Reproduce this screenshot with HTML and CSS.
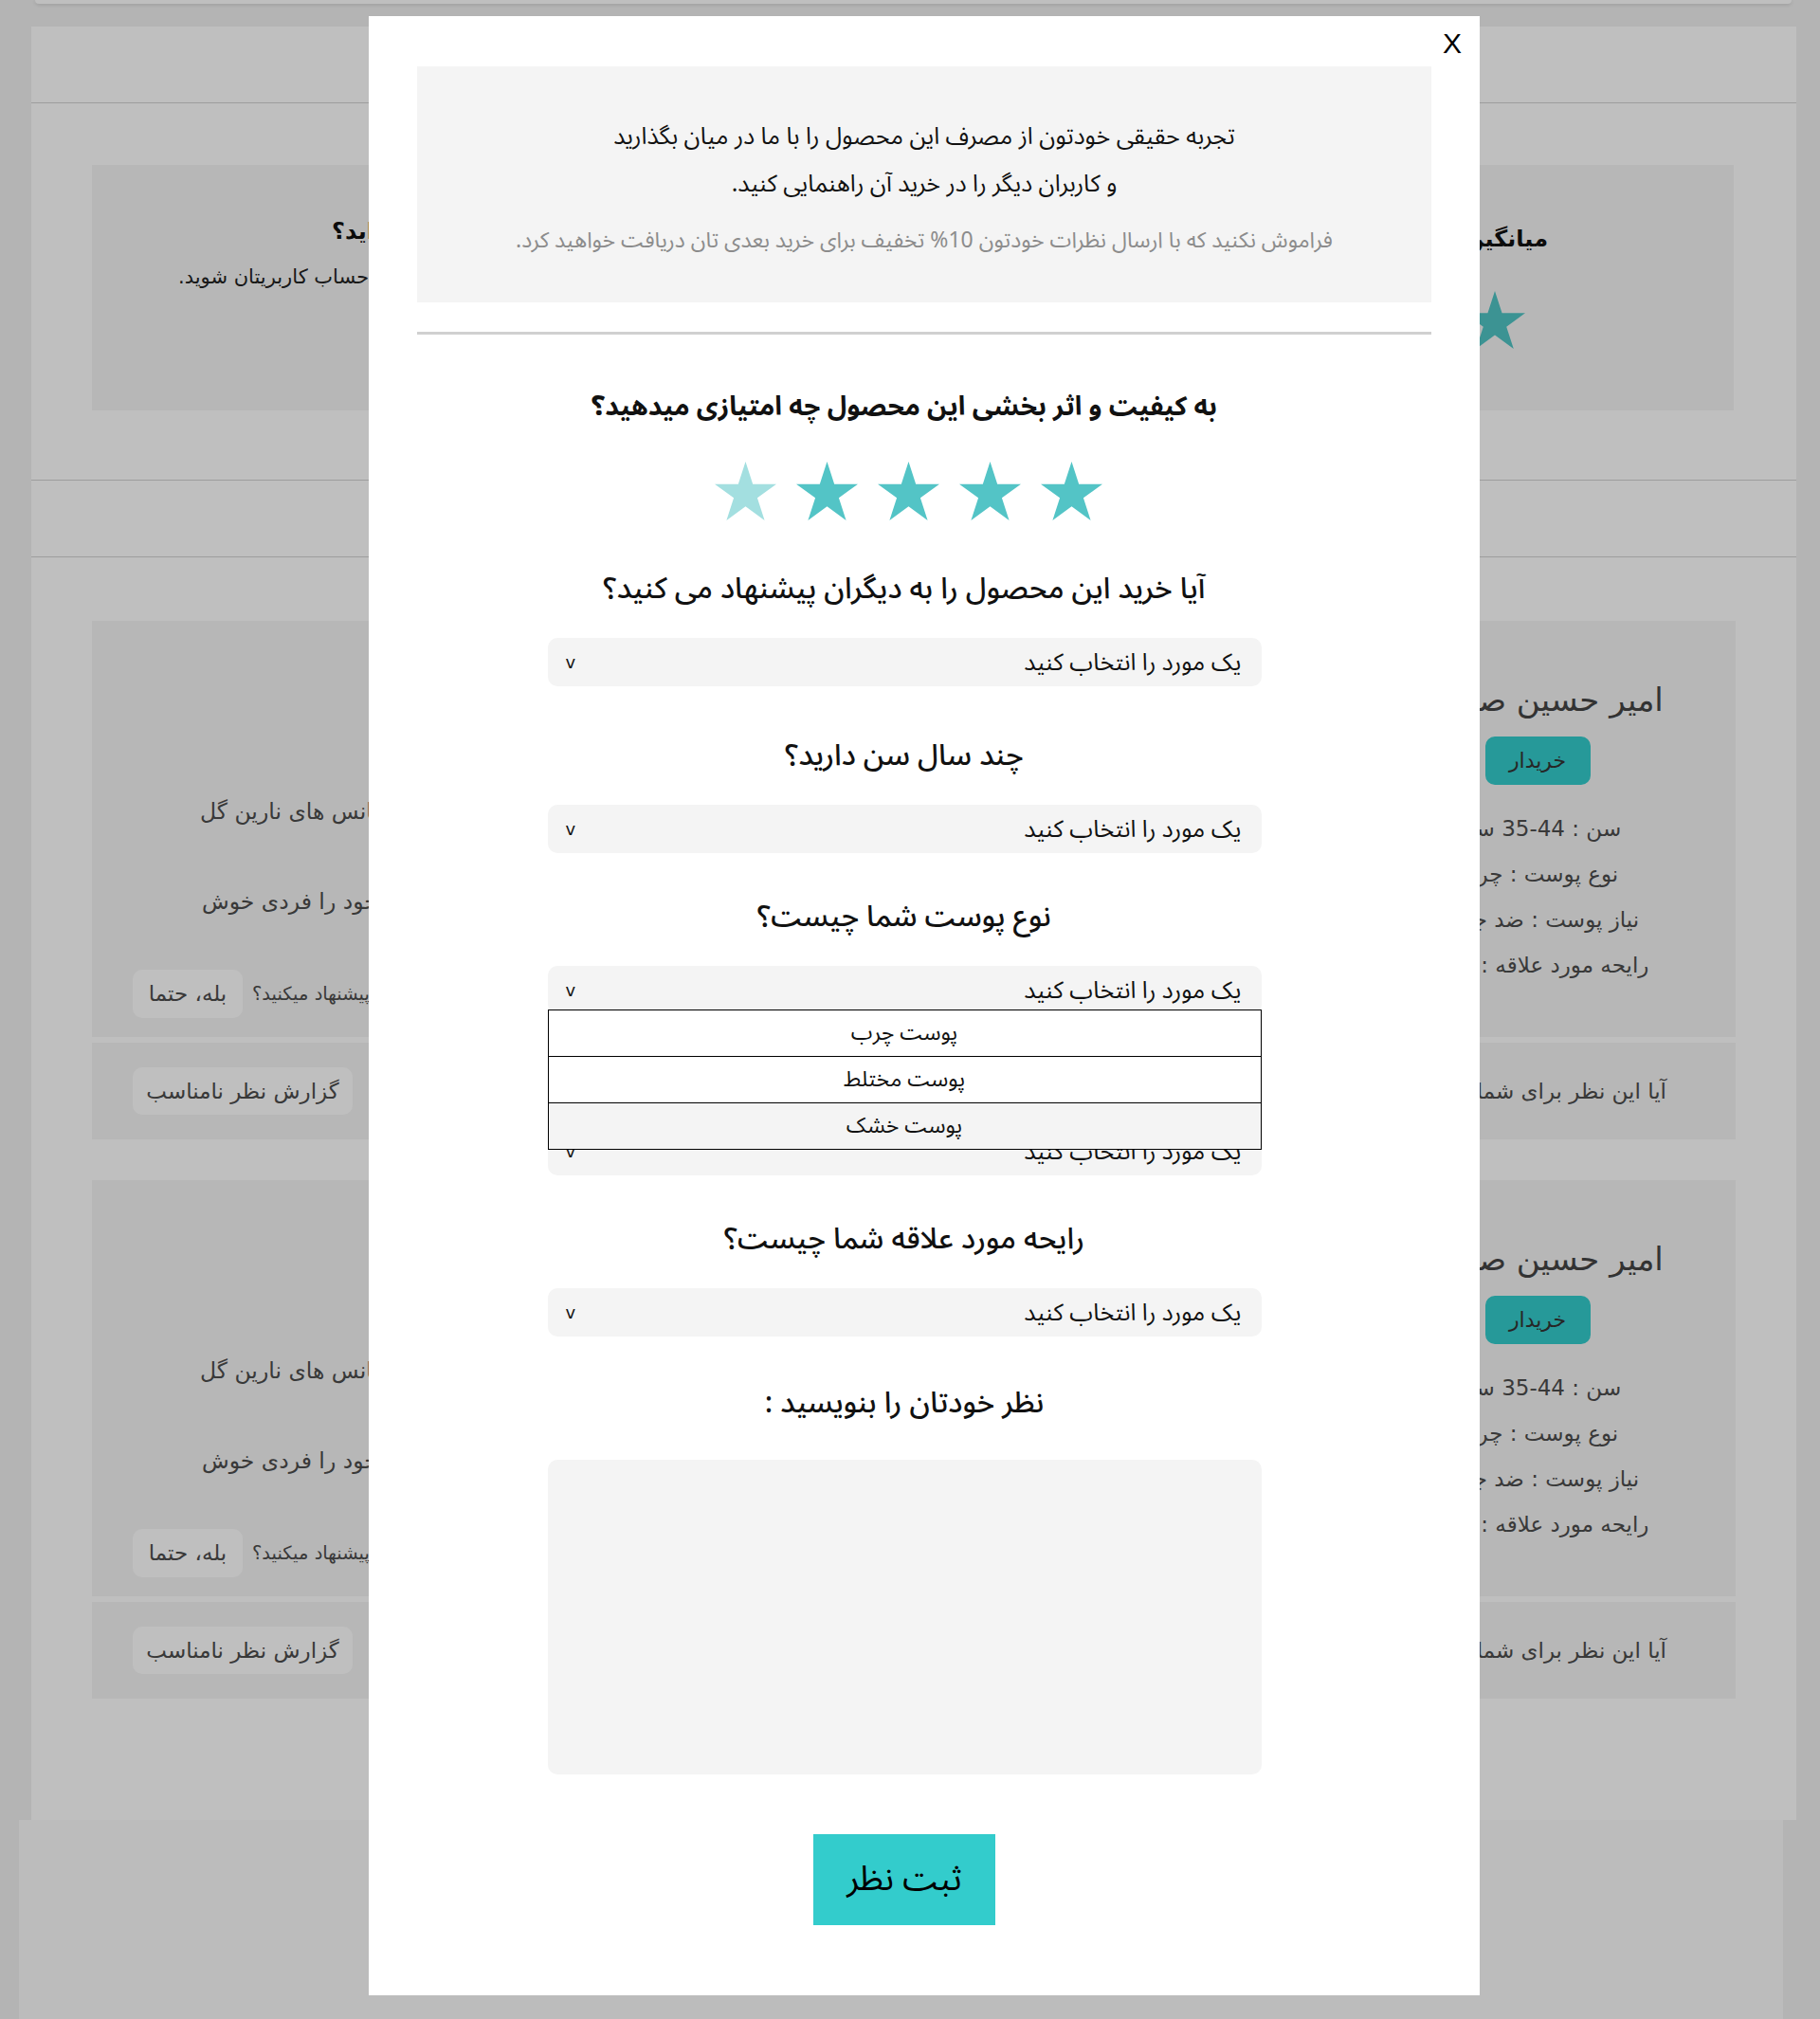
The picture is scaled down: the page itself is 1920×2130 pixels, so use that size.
FILE: index.html
```html
<!DOCTYPE html>
<html lang="fa" dir="rtl">
<head>
<meta charset="utf-8">
<title>ثبت نظر</title>
<link rel="stylesheet" href="styles.css">
</head>
<body>
<div class="page">
  <div class="topbar"></div>
  <main class="panel">
    <div class="sec-head"></div>
    <section class="summary-sec">
      <div class="summary-card">
        <div class="avg">
          <h3 class="avg-title">میانگین امتیاز کاربران</h3>
          <svg class="avg-star" viewBox="0 0 190.2 180.9"><polygon points="95.1,0 117.55,69.1 190.2,69.1 131.43,111.8 153.9,180.9 95.1,138.2 36.3,180.9 58.77,111.8 0,69.1 72.65,69.1"/></svg>
        </div>
        <div class="login-hint">
          <h3 class="hint-title">آیا این محصول را خریداری کرده اید؟</h3>
          <p class="hint-text">برای ثبت نظر ابتدا وارد حساب کاربریتان شوید.</p>
        </div>
      </div>
    </section>
    <div class="sec-head"></div>
    <section class="reviews">
      <article class="review">
        <div class="review-card">
          <div class="reviewer">
            <div class="rv-name">امیر حسین صالحی</div>
            <span class="rv-badge">خریدار</span>
            <div class="rv-info">
              <div>سن : <span dir="ltr">35-44</span> سال</div>
              <div>نوع پوست : چرب</div>
              <div>نیاز پوست : ضد جوش</div>
              <div>رایحه مورد علاقه : بابونه</div>
            </div>
          </div>
          <div class="review-body">
            <p class="rv-line rv-line1">بهترین کرمی که تا حالا استفاده کردم با رایحه اسانس های نارین گل</p>
            <p class="rv-line rv-line2">با استفاده از این محصول احساس میکنم خود را فردی خوش</p>
            <div class="rv-recommend">
              <span class="rv-ask">آیا این محصول را به دیگران پیشنهاد میکنید؟</span>
              <span class="rv-yes">بله، حتما</span>
            </div>
          </div>
        </div>
        <div class="review-foot">
          <span class="helpful">آیا این نظر برای شما مفید بود؟</span>
          <span class="report">گزارش نظر نامناسب</span>
        </div>
      </article>
      <article class="review review-next">
        <div class="review-card">
          <div class="reviewer">
            <div class="rv-name">امیر حسین صالحی</div>
            <span class="rv-badge">خریدار</span>
            <div class="rv-info">
              <div>سن : <span dir="ltr">35-44</span> سال</div>
              <div>نوع پوست : چرب</div>
              <div>نیاز پوست : ضد جوش</div>
              <div>رایحه مورد علاقه : بابونه</div>
            </div>
          </div>
          <div class="review-body">
            <p class="rv-line rv-line1">بهترین کرمی که تا حالا استفاده کردم با رایحه اسانس های نارین گل</p>
            <p class="rv-line rv-line2">با استفاده از این محصول احساس میکنم خود را فردی خوش</p>
            <div class="rv-recommend">
              <span class="rv-ask">آیا این محصول را به دیگران پیشنهاد میکنید؟</span>
              <span class="rv-yes">بله، حتما</span>
            </div>
          </div>
        </div>
        <div class="review-foot">
          <span class="helpful">آیا این نظر برای شما مفید بود؟</span>
          <span class="report">گزارش نظر نامناسب</span>
        </div>
      </article>
    </section>
  </main>
  <footer class="site-foot"></footer>
</div>

<div class="overlay"></div>

<div class="modal" role="dialog">
  <button class="close" type="button">X</button>
  <div class="intro">
    <p class="intro-main">تجربه حقیقی خودتون از مصرف این محصول را با ما در میان بگذارید<br>و کاربران دیگر را در خرید آن راهنمایی کنید.</p>
    <p class="intro-note">فراموش نکنید که با ارسال نظرات خودتون 10% تخفیف برای خرید بعدی تان دریافت خواهید کرد.</p>
  </div>
  <div class="divider"></div>
  <form class="review-form">
    <h3 class="q q-rate">به کیفیت و اثر بخشی این محصول چه امتیازی میدهید؟</h3>
    <div class="stars">
      <svg class="star" viewBox="0 0 190.2 180.9"><polygon points="95.1,0 117.55,69.1 190.2,69.1 131.43,111.8 153.9,180.9 95.1,138.2 36.3,180.9 58.77,111.8 0,69.1 72.65,69.1"/></svg>
      <svg class="star" viewBox="0 0 190.2 180.9"><polygon points="95.1,0 117.55,69.1 190.2,69.1 131.43,111.8 153.9,180.9 95.1,138.2 36.3,180.9 58.77,111.8 0,69.1 72.65,69.1"/></svg>
      <svg class="star" viewBox="0 0 190.2 180.9"><polygon points="95.1,0 117.55,69.1 190.2,69.1 131.43,111.8 153.9,180.9 95.1,138.2 36.3,180.9 58.77,111.8 0,69.1 72.65,69.1"/></svg>
      <svg class="star" viewBox="0 0 190.2 180.9"><polygon points="95.1,0 117.55,69.1 190.2,69.1 131.43,111.8 153.9,180.9 95.1,138.2 36.3,180.9 58.77,111.8 0,69.1 72.65,69.1"/></svg>
      <svg class="star star-empty" viewBox="0 0 190.2 180.9"><polygon points="95.1,0 117.55,69.1 190.2,69.1 131.43,111.8 153.9,180.9 95.1,138.2 36.3,180.9 58.77,111.8 0,69.1 72.65,69.1"/></svg>
    </div>

    <div class="q-group q-group-first">
      <h4 class="q">آیا خرید این محصول را به دیگران پیشنهاد می کنید؟</h4>
      <div class="select"><span class="sel-text">یک مورد را انتخاب کنید</span><span class="sel-arrow">v</span></div>
    </div>

    <div class="q-group q-group-second">
      <h4 class="q">چند سال سن دارید؟</h4>
      <div class="select"><span class="sel-text">یک مورد را انتخاب کنید</span><span class="sel-arrow">v</span></div>
    </div>

    <div class="q-group">
      <h4 class="q">نوع پوست شما چیست؟</h4>
      <div class="select-wrap">
        <div class="select"><span class="sel-text">یک مورد را انتخاب کنید</span><span class="sel-arrow">v</span></div>
        <ul class="options">
          <li class="option">پوست چرب</li>
          <li class="option">پوست مختلط</li>
          <li class="option option-hover">پوست خشک</li>
        </ul>
      </div>
    </div>

    <div class="q-group">
      <h4 class="q q-covered">نیاز پوست شما چیست؟</h4>
      <div class="select"><span class="sel-text">یک مورد را انتخاب کنید</span><span class="sel-arrow">v</span></div>
    </div>

    <div class="q-group">
      <h4 class="q">رایحه مورد علاقه شما چیست؟</h4>
      <div class="select"><span class="sel-text">یک مورد را انتخاب کنید</span><span class="sel-arrow">v</span></div>
    </div>

    <h4 class="q q-comment">نظر خودتان را بنویسید :</h4>
    <textarea class="comment"></textarea>

    <button class="submit" type="button">ثبت نظر</button>
  </form>
</div>
</body>
</html>
```

FILE: styles.css
```css
* { box-sizing: border-box; }
html, body { margin: 0; padding: 0; }
body {
  background: #f1f1f1;
  font-family: "DejaVu Sans", sans-serif;
  color: #4d4d4d;
  direction: rtl;
  height: 2130px;
  overflow: hidden;
}
p, h3, h4, ul { margin: 0; padding: 0; }

/* ---------- underlying page ---------- */
.topbar {
  height: 4px;
  margin: 0 30px 0 37px;
  background: #fff;
  border-radius: 0 0 8px 8px;
  box-shadow: 0 1px 4px rgba(0, 0, 0, .15);
}
.panel {
  margin: 24px 25px 0 33px;
  height: 1892px;
  background: #fff;
}
.sec-head {
  height: 81px;
  border-bottom: 1px solid #d2d2d2;
}
.summary-sec {
  height: 398px;
  padding: 65px 66px 0 64px;
  border-bottom: 1px solid #d2d2d2;
}
.summary-card {
  height: 259px;
  background: #f5f5f5;
  display: flex;
  justify-content: space-between;
  overflow: hidden;
}
.avg {
  margin-right: 196px;
  display: flex;
  flex-direction: column;
  align-items: flex-start;
}
.avg-title {
  margin-top: 60px;
  font-size: 24px;
  line-height: 36px;
  font-weight: bold;
  color: #111;
  white-space: nowrap;
}
.avg-star {
  margin-top: 37px;
  margin-right: 24px;
  width: 64px;
  height: 61px;
  fill: #51c5c5;
}
.login-hint {
  width: 900px;
  text-align: left;
  white-space: nowrap;
}
.hint-title {
  margin-top: 52px;
  padding-left: 253px;
  font-size: 24px;
  line-height: 36px;
  font-weight: bold;
  color: #111;
}
.hint-text {
  margin-top: 14px;
  padding-left: 91px;
  font-size: 21px;
  line-height: 32px;
  color: #222;
}

.reviews { padding: 67px 64px 0; }
.review-next { margin-top: 43px; }
.review-card {
  height: 439px;
  background: #f5f5f5;
  display: flex;
}
.reviewer {
  width: 418px;
  flex-shrink: 0;
  text-align: center;
  padding-top: 63px;
}
.rv-name {
  font-size: 34px;
  line-height: 40px;
  color: #444;
  white-space: nowrap;
}
.rv-badge {
  display: inline-block;
  margin-top: 19px;
  width: 111px;
  height: 51px;
  line-height: 51px;
  border-radius: 10px;
  background: #33cccc;
  color: #333;
  font-size: 22px;
}
.rv-info {
  margin-top: 22px;
  font-size: 23px;
  line-height: 48px;
  white-space: nowrap;
}
.review-body {
  flex: 1;
  text-align: left;
  white-space: nowrap;
  overflow: hidden;
}
.rv-line {
  font-size: 23.5px;
  line-height: 40px;
}
.rv-line1 { margin-top: 181px; padding-left: 114px; }
.rv-line2 { margin-top: 55px; padding-left: 116px; }
.rv-recommend {
  margin-top: 52px;
  padding-left: 43px;
  display: flex;
  justify-content: flex-end;
  align-items: center;
  gap: 10px;
}
.rv-ask { font-size: 19.5px; }
.rv-yes {
  display: inline-block;
  width: 116px;
  height: 51px;
  line-height: 51px;
  text-align: center;
  border-radius: 10px;
  background: #fff;
  font-size: 23px;
}
.review-foot {
  margin-top: 6px;
  height: 102px;
  background: #f5f5f5;
  display: flex;
  justify-content: space-between;
  align-items: center;
  padding: 0 73px 0 43px;
  white-space: nowrap;
}
.helpful { font-size: 23px; }
.report {
  display: inline-block;
  width: 232px;
  height: 50px;
  line-height: 50px;
  text-align: center;
  border-radius: 10px;
  background: #fff;
  font-size: 23px;
}
.site-foot {
  height: 210px;
  margin: 0 39px 0 20px;
  background: #fbfbfb;
}

/* ---------- overlay + modal ---------- */
.overlay {
  position: fixed;
  inset: 0;
  background: rgba(0, 0, 0, .25);
}
.modal {
  position: absolute;
  top: 17px;
  left: 389px;
  width: 1172px;
  padding: 53px 51px 74px;
  background: #fff;
  font-family: "Noto Sans Arabic", "Vazirmatn", "DejaVu Sans", sans-serif;
  color: #111;
}
.close {
  position: absolute;
  top: 14px;
  right: 19px;
  padding: 0;
  border: 0;
  background: none;
  font-family: "Liberation Sans", Arial, sans-serif;
  font-size: 30px;
  line-height: 30px;
  color: #000;
}
.intro {
  height: 249px;
  padding: 49px 20px 0;
  background: #f4f4f4;
  text-align: center;
}
.intro-main {
  font-size: 25px;
  line-height: 50px;
  color: #111;
}
.intro-note {
  margin-top: 15px;
  font-size: 23px;
  line-height: 40px;
  color: #8c8c8c;
}
.divider {
  margin-top: 31px;
  height: 3px;
  background: #d0d0d0;
}
.review-form {
  padding-right: 42px;
  text-align: center;
}
.q {
  font-size: 31px;
  line-height: 40px;
  font-weight: 500;
  color: #111;
  white-space: nowrap;
}
.q-rate {
  margin-top: 57px;
  font-size: 28px;
  font-weight: bold;
}
.stars {
  margin-top: 37px;
  height: 62px;
  padding-left: 8px;
  display: flex;
  justify-content: center;
  gap: 21px;
}
.star {
  width: 65px;
  height: 62px;
  fill: #53c4c6;
}
.star-empty { fill: #a3dfe0; }

.q-group { margin-top: 47px; }
.q-group-first { margin-top: 52px; }
.q-group-second { margin-top: 53px; }
.q-group .q { margin-bottom: 32px; }
.q-covered { visibility: hidden; }

.select-wrap {
  position: relative;
  width: 753px;
  margin: 0 auto;
}
.select {
  width: 753px;
  height: 51px;
  margin: 0 auto;
  padding: 0 21px 0 19px;
  border-radius: 10px;
  background: #f4f4f4;
  display: flex;
  justify-content: space-between;
  align-items: center;
  font-size: 25px;
  color: #111;
}
.sel-arrow {
  font-family: "DejaVu Sans", sans-serif;
  font-size: 18px;
}
.options {
  position: absolute;
  top: 46px;
  left: 0;
  right: 0;
  list-style: none;
  background: #fff;
  border: 1px solid #000;
  border-bottom: 0;
  z-index: 2;
}
.option {
  height: 49px;
  line-height: 48px;
  border-bottom: 1px solid #000;
  font-size: 23px;
  color: #111;
}
.option-hover { background: #f4f4f4; }

.q-comment { margin-top: 50px; }
.comment {
  display: block;
  width: 753px;
  height: 332px;
  margin: 40px auto 0;
  border: 0;
  border-radius: 10px;
  background: #f4f4f4;
  resize: none;
  font: inherit;
}
.submit {
  display: block;
  width: 192px;
  height: 96px;
  margin: 63px auto 0;
  border: 0;
  background: #33cccc;
  font-family: inherit;
  font-size: 36px;
  color: #000;
}
```
